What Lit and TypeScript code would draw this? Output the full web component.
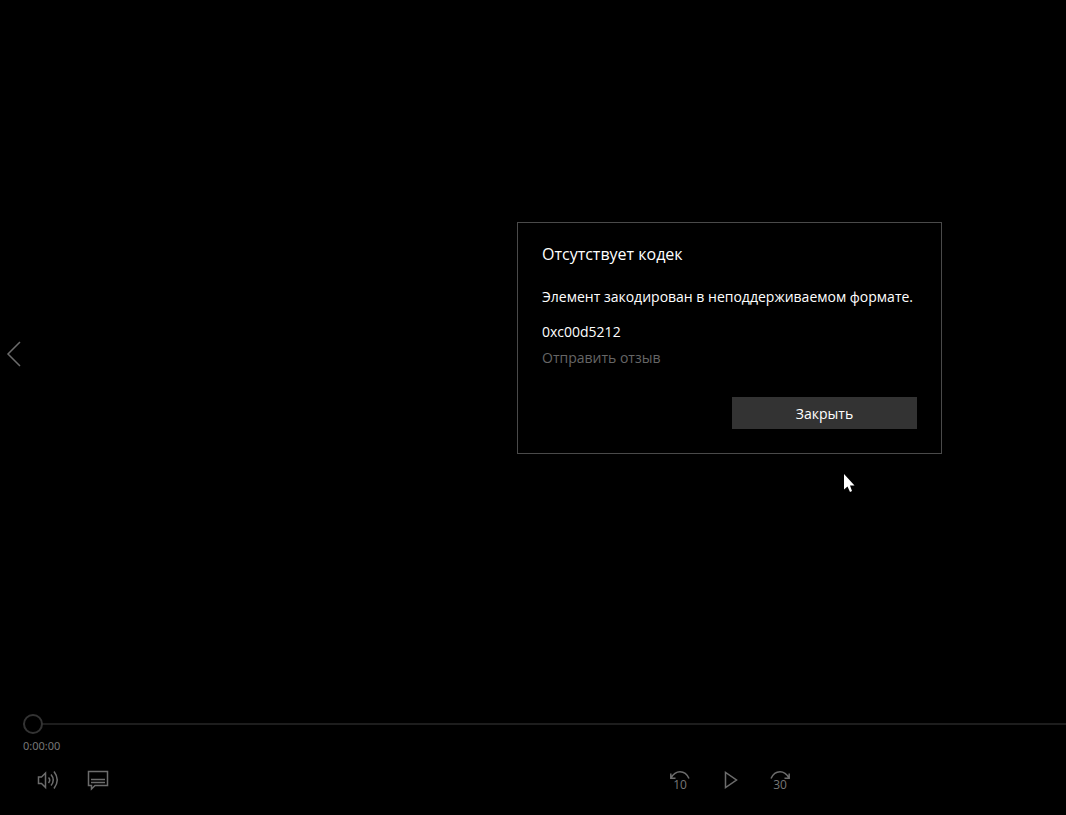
import { LitElement, html, css, svg } from "lit";
import { customElement, state } from "lit/decorators.js";

const icons = {
  back: svg`<path d="M20 1 8 13 20 25" />`,
  volume: svg`<path d="M1.500 8H4.500L8.500 4V18.500L4.500 14.500H1.500Z" /><path d="M11.500 8.500Q14 11.200 11.500 14M14 5.500Q18.500 11 14 16.500M17 2.500Q23.500 11 17 19.500" />`,
  subtitles: svg`<path d="M1.500 2.500H20.500V16.500H8L4.500 20V16.500H1.500Z" /><path d="M4 10.500H18M4 13.500H18" />`,
  rewind: svg`<path d="M1.800 4.500V9.300H6.500M2 9Q5.500 2.700 11 2.700Q17 2.700 20 9.500" /><text x="11" y="20">10</text>`,
  play: svg`<path d="M6.500 3.500V18.500L17.500 11Z" />`,
  forward: svg`<path d="M20.200 4.500V9.300H15.500M20 9Q16.500 2.700 11 2.700Q5 2.700 2 9.500" /><text x="11" y="20">30</text>`,
};

@customElement("error-dialog")
export class ErrorDialog extends LitElement {
  static styles = css`
    :host {
      display: block;
      box-sizing: border-box;
      width: 425px;
      padding: 19px 24px 24px;
      border: 1px solid #4a4a4a;
      background: #000;
      color: #fff;
      font-size: 14px;
      line-height: 20px;
    }
    h1 {
      margin: 0 0 21px;
      font-size: 16px;
      line-height: 24px;
      font-weight: 400;
    }
    p {
      margin: 0 0 15px;
      white-space: nowrap;
    }
    .code {
      margin-bottom: 6px;
    }
    .feedback {
      display: block;
      width: max-content;
      color: #666;
      text-decoration: none;
    }
    .close {
      display: block;
      width: 185px;
      height: 32px;
      margin: 29px 0 0 auto;
      padding: 2px 0 0;
      border: 0;
      background: #333;
      color: #fff;
      font: inherit;
    }
  `;

  render() {
    return html`
      <h1>Отсутствует кодек</h1>
      <p>Элемент закодирован в неподдерживаемом формате.</p>
      <p class="code">0xc00d5212</p>
      <a class="feedback" href="#feedback">Отправить отзыв</a>
      <button class="close" type="button">Закрыть</button>
    `;
  }
}

@customElement("app-root")
export class AppRoot extends LitElement {
  static styles = css`
    :host {
      display: flex;
      flex-direction: column;
      position: relative;
      min-height: 100vh;
      overflow: hidden;
      background: #000;
      color: #777;
      font-family: "Open Sans", "Noto Sans", sans-serif;
    }
    svg {
      display: block;
      fill: none;
      stroke: #6c6c6c;
      stroke-width: 1.5;
    }
    svg text {
      fill: #777;
      stroke: none;
      font-size: 12px;
      text-anchor: middle;
    }
    button {
      padding: 0;
      border: 0;
      background: none;
      font: inherit;
    }
    .stage {
      flex: 1;
      display: grid;
      grid-template-columns: 393px 1fr;
      align-items: center;
    }
    .back {
      width: 26px;
    }
    error-dialog {
      justify-self: center;
      margin-bottom: 32px;
    }
    .controls {
      padding: 6px 0 10px 23px;
    }
    .seek {
      appearance: none;
      display: block;
      width: 100%;
      height: 20px;
      margin: 0;
      background: none;
    }
    .seek::-webkit-slider-runnable-track {
      height: 2px;
      background: #1d1d1d;
    }
    .seek::-webkit-slider-thumb {
      appearance: none;
      box-sizing: border-box;
      width: 20px;
      height: 20px;
      margin-top: -9px;
      border: 2px solid #333;
      border-radius: 50%;
      background: #000;
    }
    .time {
      display: block;
      margin: 4px 0 1px;
      font-family: "Noto Sans", sans-serif;
      font-size: 11px;
      line-height: 16px;
    }
    .bar {
      display: grid;
      grid-template-columns: 371px 1fr;
    }
    .group {
      display: flex;
    }
    .transport {
      justify-content: center;
    }
    .icon {
      display: grid;
      place-items: center;
      width: 50px;
      height: 50px;
    }
    .pointer {
      position: absolute;
      left: 843px;
      top: 474px;
      fill: #fff;
      stroke: none;
    }
  `;

  @state() private position = 0;

  private iconButton(label: string, icon: unknown) {
    return html`<button class="icon" type="button" aria-label=${label}>
      <svg width="32" height="32" viewBox="-5 -5 32 32">${icon}</svg>
    </button>`;
  }

  render() {
    return html`
      <main class="stage">
        <button class="back" type="button" aria-label="Назад">
          <svg width="26" height="26" viewBox="0 0 26 26">${icons.back}</svg>
        </button>
        <error-dialog role="dialog" aria-label="Отсутствует кодек"></error-dialog>
      </main>
      <footer class="controls">
        <input class="seek" type="range" min="0" max="100" aria-label="Позиция" .value=${String(this.position)} />
        <time class="time">0:00:00</time>
        <div class="bar">
          <div class="group">
            ${this.iconButton("Громкость", icons.volume)}
            ${this.iconButton("Субтитры", icons.subtitles)}
          </div>
          <div class="group transport">
            ${this.iconButton("Назад на 10 секунд", icons.rewind)}
            ${this.iconButton("Воспроизвести", icons.play)}
            ${this.iconButton("Вперёд на 30 секунд", icons.forward)}
          </div>
        </div>
      </footer>
      <svg class="pointer" width="12" height="19" viewBox="0 0 12 19" aria-hidden="true">
        <path d="M1 0V15.500L4.500 12.500L7 18L9 17L7 11.500H11.500Z" />
      </svg>
    `;
  }
}
